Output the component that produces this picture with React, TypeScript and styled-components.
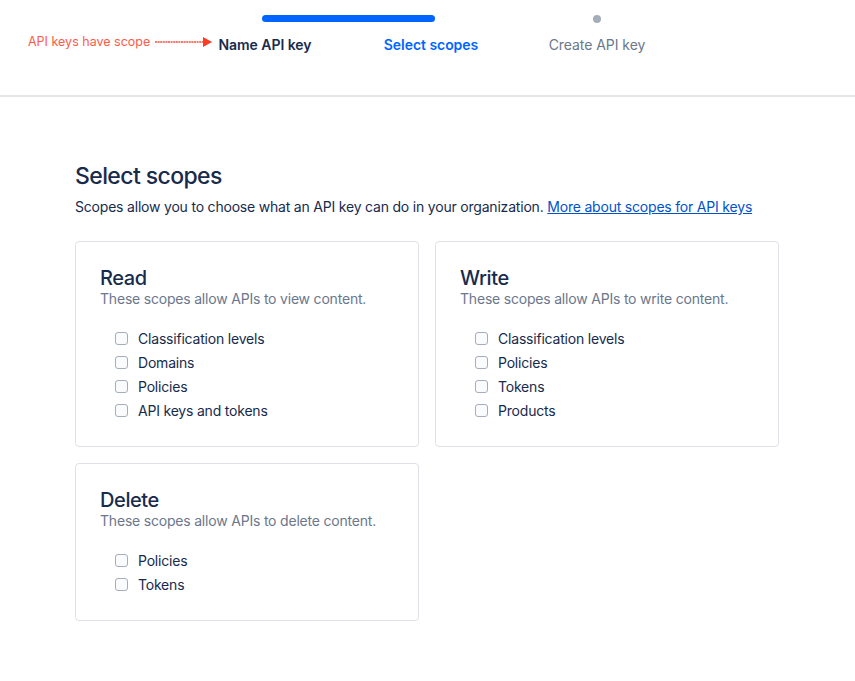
import * as React from 'react'
import styled, { createGlobalStyle } from 'styled-components'

const GlobalStyle = createGlobalStyle`
    html, body {
        margin: 0;
        padding: 0;
        background: #ffffff;
    }
    body {
        font-family: Inter, "Liberation Sans", sans-serif;
        color: #172b4d;
        letter-spacing: -0.2px;
        -webkit-font-smoothing: antialiased;
    }
`

const Page = styled.div`
    width: 855px;
    min-height: 681px;
`

const Header = styled.header`
    position: relative;
    height: 95px;
    border-bottom: 2px solid #e4e6ea;
    display: flex;
    justify-content: center;
`

// red hint written on top of the screenshot
const Annotation = styled.div`
    position: absolute;
    left: 28px;
    top: 34px;
    display: flex;
    align-items: center;
    gap: 5px;
    font-size: 12.5px;
    letter-spacing: 0;
    color: #ff5a48;
    white-space: nowrap;
`

const Tracker = styled.div`
    display: grid;
    grid-template-columns: repeat(3, 166px);
    grid-template-rows: 7px auto;
    row-gap: 14px;
    padding-top: 15px;
    margin-left: 7px;
`

const ProgressBar = styled.div`
    grid-column: 1 / 3;
    margin: 0 79px 0 80px;
    height: 7px;
    border-radius: 4px;
    background: #0065ff;
`

const Dot = styled.div`
    grid-column: 3;
    justify-self: center;
    align-self: center;
    width: 8px;
    height: 8px;
    border-radius: 50%;
    background: #a5adba;
`

const StepLabel = styled.div<{ $state: 'done' | 'current' | 'todo' }>`
    text-align: center;
    font-size: 14px;
    line-height: 18px;
    letter-spacing: -0.05px;
    font-weight: ${(p) => (p.$state === 'todo' ? 400 : 600)};
    color: ${(p) =>
        p.$state === 'current' ? '#0065ff' : p.$state === 'done' ? '#172b4d' : '#6b778c'};
`

const Main = styled.main`
    padding: 64px 0 40px 75px;
`

const Title = styled.h1`
    margin: 0;
    font-size: 23px;
    line-height: 30px;
    font-weight: 500;
    letter-spacing: -0.6px;
    color: #172b4d;
`

const Description = styled.p`
    margin: 7px 0 0;
    font-size: 14px;
    line-height: 18px;
    color: #172b4d;
`

const Link = styled.a`
    color: #0052cc;
    text-decoration: underline;
`

const CardGrid = styled.div`
    margin-top: 25px;
    display: grid;
    grid-template-columns: repeat(2, 344px);
    gap: 16px;
    align-items: start;
`

const Card = styled.section`
    border: 1px solid #dfe1e6;
    border-radius: 4px;
    padding: 24px 24px 24px 24px;
`

const CardTitle = styled.h2`
    margin: 0;
    font-size: 20px;
    line-height: 24px;
    font-weight: 500;
    letter-spacing: -0.4px;
    color: #172b4d;
`

const CardText = styled.p`
    margin: 0;
    font-size: 14px;
    line-height: 18px;
    color: #6b778c;
`

const ScopeList = styled.ul`
    list-style: none;
    margin: 18px 0 0;
    padding: 0 0 0 15px;
`

const ScopeRow = styled.li`
    display: flex;
    align-items: center;
    gap: 10px;
    height: 24px;
    font-size: 14px;
    color: #172b4d;
`

const CheckBox = styled.span`
    box-sizing: border-box;
    width: 13px;
    height: 13px;
    border: 1.5px solid #a5adba;
    border-radius: 3px;
    background: #fafbfc;
`

type Scope = { title: string; text: string; items: string[] }

const scopes: Scope[] = [
    {
        title: 'Read',
        text: 'These scopes allow APIs to view content.',
        items: ['Classification levels', 'Domains', 'Policies', 'API keys and tokens'],
    },
    {
        title: 'Write',
        text: 'These scopes allow APIs to write content.',
        items: ['Classification levels', 'Policies', 'Tokens', 'Products'],
    },
    {
        title: 'Delete',
        text: 'These scopes allow APIs to delete content.',
        items: ['Policies', 'Tokens'],
    },
]

const Arrow = () => (
    <svg width="58" height="12" viewBox="0 0 58 12">
        <line x1="0" y1="6" x2="49" y2="6" stroke="#ff4d3a" strokeWidth="1.3" strokeDasharray="2 0.6" />
        <polygon points="48,1 57,6 48,11" fill="#ff3b22" />
    </svg>
)

export default function App() {
    return (
        <Page>
            <GlobalStyle />
            <Header>
                <Annotation>
                    API keys have scope
                    <Arrow />
                </Annotation>
                <Tracker>
                    <ProgressBar />
                    <Dot />
                    <StepLabel $state="done">Name API key</StepLabel>
                    <StepLabel $state="current">Select scopes</StepLabel>
                    <StepLabel $state="todo">Create API key</StepLabel>
                </Tracker>
            </Header>
            <Main>
                <Title>Select scopes</Title>
                <Description>
                    Scopes allow you to choose what an API key can do in your organization.{' '}
                    <Link href="#">More about scopes for API keys</Link>
                </Description>
                <CardGrid>
                    {scopes.map((s) => (
                        <Card key={s.title}>
                            <CardTitle>{s.title}</CardTitle>
                            <CardText>{s.text}</CardText>
                            <ScopeList>
                                {s.items.map((item) => (
                                    <ScopeRow key={item}>
                                        <CheckBox />
                                        {item}
                                    </ScopeRow>
                                ))}
                            </ScopeList>
                        </Card>
                    ))}
                </CardGrid>
            </Main>
        </Page>
    )
}
